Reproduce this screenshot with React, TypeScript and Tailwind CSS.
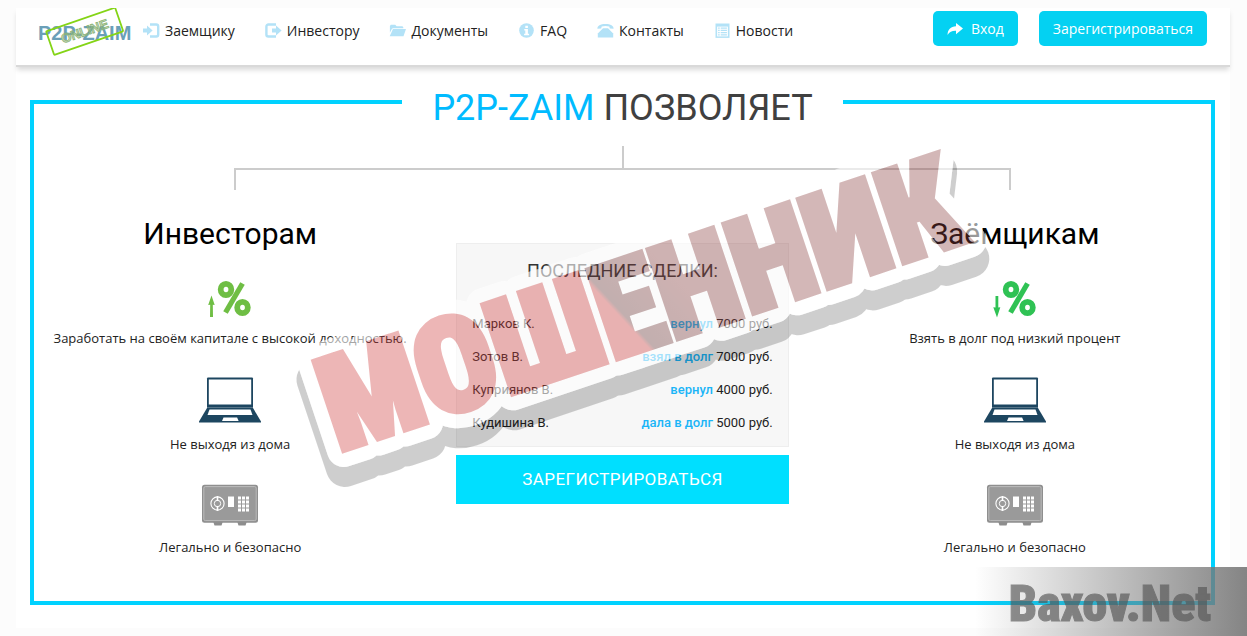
import React from 'react';

interface IconProps {
  className?: string;
}

interface Deal {
  name: string;
  action: string;
  amount: string;
}

const LoginIcon = ({ className }: IconProps) => (
  <svg viewBox="0 0 17 16" className={className} aria-hidden="true">
    <path d="M0 5.6h4V2.4L9.6 7.5 4 12.6V9.4H0z" fill="currentColor" />
    <path d="M7 1.5h6.2a2 2 0 0 1 2 2v8a2 2 0 0 1-2 2H7" fill="none" stroke="currentColor" strokeWidth="2.4" />
  </svg>
);

const LogoutIcon = ({ className }: IconProps) => (
  <svg viewBox="0 0 17 16" className={className} aria-hidden="true">
    <path d="M7 5.6h4V2.4l5.6 5.1-5.6 5.1V9.4H7z" fill="currentColor" />
    <path d="M11 1.5H3.4a2 2 0 0 0-2 2v8a2 2 0 0 0 2 2H11" fill="none" stroke="currentColor" strokeWidth="2.4" />
  </svg>
);

const FolderIcon = ({ className }: IconProps) => (
  <svg viewBox="0 0 19 16" className={className} aria-hidden="true">
    <path d="M1 10V2.5L2 1h5l1.5 1.6H15l1 1.2v1H4.2L3 6z" fill="currentColor" />
    <path d="M4.4 5.8H19L16.2 14H.8z" fill="currentColor" />
  </svg>
);

const InfoIcon = ({ className }: IconProps) => (
  <svg viewBox="0 0 16 16" className={className} aria-hidden="true">
    <circle cx="8" cy="7.5" r="7.3" fill="currentColor" />
    <path d="M6.8 2.8h2.6v2.1H6.8zM5.8 6.1h3.6v4.7h1.2v1.5H5.6v-1.5h1.2V7.6h-1z" fill="#fff" />
  </svg>
);

const PhoneIcon = ({ className }: IconProps) => (
  <svg viewBox="0 0 17 16" className={className} aria-hidden="true">
    <path d="M.4 5.8C.2 3 3.4 1 8.5 1s8.3 2 8.1 4.800l-3.800-.4-.5-1.800c-2.400-.7-5.200-.7-7.600 0l-.5 1.800z" fill="currentColor" />
    <path d="M6 5.200h5l5.200 5.400v4H.8v-4z" fill="currentColor" />
  </svg>
);

const ListIcon = ({ className }: IconProps) => (
  <svg viewBox="0 0 16 16" className={className} aria-hidden="true">
    <path d="M1 .5h14v14.4H1z" fill="currentColor" />
    <path d="M2.600 3.600h10.800v9.800H2.600z" fill="#fff" />
    <path d="M3.600 5.200h1.600M6.200 5.200h6.200M3.600 7.400h1.600M6.200 7.400h6.200M3.600 9.600h1.600M6.200 9.600h6.200M3.600 11.800h1.600M6.200 11.800h6.200" stroke="currentColor" strokeWidth="1.300" />
  </svg>
);

const ShareIcon = ({ className }: IconProps) => (
  <svg viewBox="0 0 16 14" className={className} aria-hidden="true">
    <path d="M9 1l7 5.600-7 5.600V8.800C5.400 8.600 2.400 9.800.6 13 .4 7.600 3.800 4.400 9 4.200z" fill="currentColor" />
  </svg>
);

const Logo = () => (
  <svg viewBox="0 0 100 52" className="h-[52px] w-[100px]" role="img" aria-label="P2P-ZAIM online">
    <text x="2" y="32" fontSize="20" fontWeight="700" fill="#6a9fb8" className="font-['Liberation_Sans',Arial,sans-serif]">
      P2P-ZAIM
    </text>
    <g transform="rotate(-19 48 23)">
      <rect x="12" y="11" width="73" height="25" rx="1" fill="none" stroke="#84d416" strokeWidth="1.800" />
      <text
        x="24"
        y="28"
        fontSize="13"
        fontWeight="700"
        fill="#8db478"
        fillOpacity="0.500"
        stroke="#8db478"
        strokeWidth="0.800"
        className="font-['Liberation_Sans',Arial,sans-serif]"
      >
        ONLINE
      </text>
    </g>
  </svg>
);

const PercentIcon = ({ up }: { up: boolean }) => (
  <svg viewBox="0 0 44 40" className={up ? 'h-10 w-11 text-[#6fbe44]' : 'h-10 w-11 text-[#2fc254]'} aria-hidden="true">
    {up ? (
      <path d="M3.500 17.500l3.200 9.500-1.900-.3.200 12.300H2l.2-12.300-2 .3z" fill="currentColor" />
    ) : (
      <path d="M2.500 18h2.800v11.600l2-.4L4 39.500.3 29.200l2.200.4z" fill="currentColor" />
    )}
    <g fill="none" stroke="currentColor">
      <ellipse cx="18" cy="11.500" rx="5.300" ry="5.700" strokeWidth="5.800" />
      <ellipse cx="34.500" cy="29.500" rx="5.300" ry="5.700" strokeWidth="5.800" />
      <path d="M34.500 5.500L17.500 34.500" strokeWidth="5.200" />
    </g>
  </svg>
);

const LaptopIcon = () => (
  <svg viewBox="0 0 64 48" className="h-12 w-16" aria-hidden="true">
    <path d="M10 1.500h44a1 1 0 0 1 1 1V31H9V2.500a1 1 0 0 1 1-1z" fill="#1d4660" />
    <path d="M10.800 3.500h42.400v25H10.800z" fill="#fff" />
    <path d="M9 32h46l8 13.500v1H1v-1z" fill="#1d4660" />
    <path d="M11.500 33.500h41l2 5.500h-45z" fill="#fff" />
    <path d="M9 30.500h46" stroke="#1d4660" strokeWidth="2.500" />
    <path d="M25.500 41.500h13.600l1.500 3.400H24z" fill="#fff" />
  </svg>
);

const SafeIcon = () => (
  <svg viewBox="0 0 58 42" className="h-[42px] w-[58px]" aria-hidden="true">
    <path d="M12 37h10l-1.500 4.500h-7zM36 37h10l-1.500 4.500h-7z" fill="#8d8d8d" />
    <rect x="1" y=".8" width="56" height="38" rx="2.500" fill="#8f8f8f" />
    <rect x="2.800" y="2.600" width="52.400" height="34" rx="1.500" fill="#9a9a9a" stroke="#bcbcbc" strokeWidth="1" />
    <g fill="none" stroke="#fff">
      <circle cx="16.500" cy="19.500" r="6.600" strokeWidth="1.100" />
      <circle cx="16.500" cy="19.500" r="3.200" strokeWidth="1" />
      <path d="M16.500 12v5M16.500 22v5" strokeWidth="1.600" />
    </g>
    <path d="M27 12.500h6V23h-6z" fill="#fff" />
    <path d="M37 14h11M37 18h11M37 22h11M37 26h11" stroke="#fff" strokeWidth="3" strokeDasharray="3 1" />
  </svg>
);

// big warning stamp laid over the page
const Stamp = () => (
  <svg
    viewBox="0 0 720 370"
    className="pointer-events-none absolute top-[117px] left-[274px] h-[370px] w-[720px]"
    role="img"
    aria-label="Мошенник"
  >
    <defs>
      <text
        id="stamp-word"
        x="48"
        y="327"
        fontSize="131"
        fontWeight="900"
        transform="rotate(-18.5 48 327)"
        className="font-['Liberation_Sans_Narrow','Roboto_Condensed',Roboto,sans-serif]"
      >
        МОШЕННИК
      </text>
      {/* runs in the rotated space of the word */}
      <linearGradient id="stamp-ink" gradientUnits="userSpaceOnUse" x1="286" y1="290" x2="410" y2="234">
        <stop offset="0.490" stopColor="#d04242" />
        <stop offset="0.520" stopColor="#6e3c3c" />
        <stop offset="1" stopColor="#8e4343" />
      </linearGradient>
      <mask id="stamp-edge" maskUnits="userSpaceOnUse" x="0" y="0" width="720" height="370">
        <rect width="720" height="370" fill="#fff" />
        <use href="#stamp-word" stroke="#000" strokeWidth="34" strokeLinejoin="round" />
      </mask>
      <mask id="stamp-fill" maskUnits="userSpaceOnUse" x="0" y="0" width="720" height="370">
        <rect width="720" height="370" fill="#fff" />
        <use href="#stamp-word" stroke="#000" strokeWidth="6" />
      </mask>
    </defs>
    <g mask="url(#stamp-edge)" opacity="0.190">
      <g transform="translate(1 18)">
        <use href="#stamp-word" stroke="#000" strokeWidth="38" strokeLinejoin="round" />
      </g>
    </g>
    <g mask="url(#stamp-fill)" opacity="0.600">
      <use href="#stamp-word" fill="#fff" stroke="#fff" strokeWidth="34" strokeLinejoin="round" />
    </g>
    <g opacity="0.380">
      <use href="#stamp-word" fill="url(#stamp-ink)" stroke="url(#stamp-ink)" strokeWidth="6" />
    </g>
  </svg>
);

const navItems = [
  { label: 'Заемщику', Icon: LoginIcon },
  { label: 'Инвестору', Icon: LogoutIcon },
  { label: 'Документы', Icon: FolderIcon },
  { label: 'FAQ', Icon: InfoIcon },
  { label: 'Контакты', Icon: PhoneIcon },
  { label: 'Новости', Icon: ListIcon },
];

const deals: Deal[] = [
  { name: 'Марков К.', action: 'вернул', amount: '7000 руб.' },
  { name: 'Зотов В.', action: 'взял в долг', amount: '7000 руб.' },
  { name: 'Куприянов В.', action: 'вернул', amount: '4000 руб.' },
  { name: 'Кудишина В.', action: 'дала в долг', amount: '5000 руб.' },
];

function Benefits({ title, lead, up }: { title: string; lead: string; up: boolean }) {
  return (
    <div className="flex flex-col items-center pt-6 text-center text-[13px] leading-5 text-[#222]">
      <h3 className="font-[Roboto,sans-serif] text-[30px] leading-10 text-black">{title}</h3>
      <div className="mt-6 mb-2.5">
        <PercentIcon up={up} />
      </div>
      <p className="whitespace-nowrap">{lead}</p>
      <div className="mt-7 mb-2.5">
        <LaptopIcon />
      </div>
      <p>Не выходя из дома</p>
      <div className="mt-[30px] mb-[11px]">
        <SafeIcon />
      </div>
      <p>Легально и безопасно</p>
    </div>
  );
}

export default function App() {
  return (
    <div className="relative overflow-hidden bg-[#fcfcfc] py-2 pr-[17px] pl-4 font-['Open_Sans','Noto_Sans',sans-serif]">
      <div className="relative bg-white pb-[23px]">
        <header className="flex h-[59px] items-start border-b-2 border-[#d9d9d9] pr-[23px] pl-5 shadow-[0_4px_5px_-1px_rgba(0,0,0,0.15)]">
          <a href="#" className="shrink-0">
            <Logo />
          </a>
          <nav className="ml-[7px] flex gap-[30px] pt-[13px] text-sm leading-5 text-[#222]">
            {navItems.map(({ label, Icon }) => (
              <a key={label} href="#" className="flex items-center gap-[5px]">
                <Icon className="h-4 w-[17px] text-[#b3e2f7]" />
                {label}
              </a>
            ))}
          </nav>
          <div className="ml-auto flex gap-[21px] pt-[3px] text-sm text-white">
            <button className="flex h-[35px] items-center gap-2 rounded-[5px] bg-[#04d1f2] px-3.5">
              <ShareIcon className="h-3.5 w-4" />
              Вход
            </button>
            <button className="h-[35px] rounded-[5px] bg-[#04d1f2] px-3.5">Зарегистрироваться</button>
          </div>
        </header>

        <section className="mr-[15px] ml-3.5 mt-[33px] border-4 border-[#00d2ff] pb-11">
          <h2 className="mx-auto -mt-4 w-fit bg-white px-[30px] font-[Roboto,sans-serif] text-4xl leading-10 text-[#404040]">
            <span className="text-[#0bf]">P2P-ZAIM</span> ПОЗВОЛЯЕТ
          </h2>
          <div className="mx-auto mt-[18px] h-[22px] w-0.5 bg-[#ccc]" />
          <div className="mx-[17%] h-[22px] border-x-2 border-t-2 border-[#ccc]" />

          <div className="grid grid-cols-3">
            <Benefits title="Инвесторам" lead="Заработать на своём капитале с высокой доходностью." up />

            <div className="px-[30px] pt-[53px] font-[Roboto,sans-serif]">
              <div className="border border-[#eee] bg-[#f7f7f7] px-[15px] pt-[17px] pb-[7px]">
                <h4 className="text-center text-lg leading-5 text-[#333]">ПОСЛЕДНИЕ СДЕЛКИ:</h4>
                <ul className="mt-[26px] text-[13px] leading-[33px] text-[#222]">
                  {deals.map((deal) => (
                    <li key={deal.name} className="flex justify-between">
                      <span>{deal.name}</span>
                      <span>
                        <span className="font-medium text-[#1bb5f7]">{deal.action}</span> {deal.amount}
                      </span>
                    </li>
                  ))}
                </ul>
              </div>
              <button className="mt-2 h-[49px] w-full bg-[#00dfff] text-[17px] tracking-wide text-white">
                ЗАРЕГИСТРИРОВАТЬСЯ
              </button>
            </div>

            <Benefits title="Заёмщикам" lead="Взять в долг под низкий процент" up={false} />
          </div>
        </section>

        <Stamp />
      </div>

      <div className="absolute right-0 bottom-0 flex h-[69px] w-[272px] items-center justify-end bg-linear-to-r from-transparent to-[#777]/90 pt-1 pr-9">
        <span className="font-['Liberation_Sans_Narrow','Roboto_Condensed',Roboto,sans-serif] text-[50px] leading-none font-black text-[#555] opacity-65 [-webkit-text-stroke:1px_#555]">
          Baxov.Net
        </span>
      </div>
    </div>
  );
}
